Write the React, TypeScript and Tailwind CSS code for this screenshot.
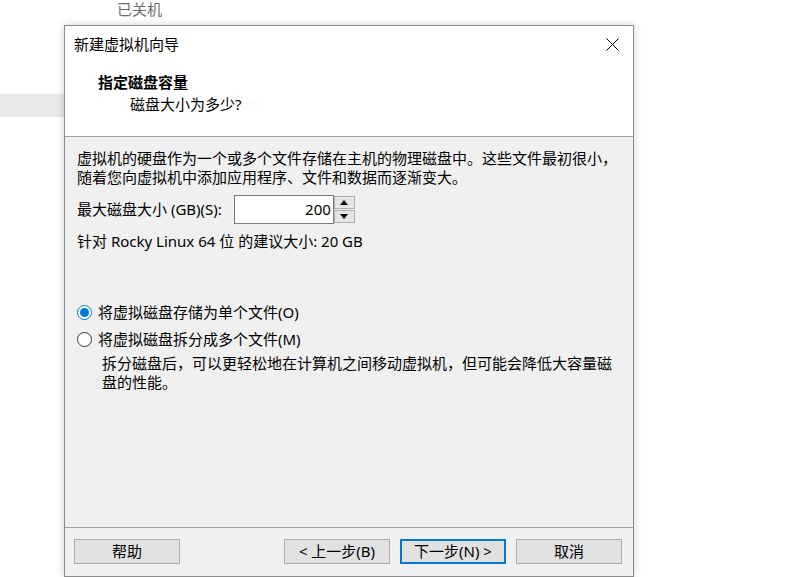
const FONT = "font-['Noto_Sans','Noto_Sans_CJK_SC',sans-serif]"

function Radio({ checked, label }: { checked: boolean; label: string }) {
  return (
    <div className="flex h-[22px] items-center">
      <span
        className={
          checked
            ? "flex h-[15px] w-[15px] items-center justify-center rounded-full border border-[#0078d7] bg-white"
            : "flex h-[15px] w-[15px] items-center justify-center rounded-full border border-[#333333] bg-white"
        }
      >
        {checked && <span className="h-[9px] w-[9px] rounded-full bg-[#0078d7]" />}
      </span>
      <span className="ml-[6px] text-[15px] leading-[19px] text-black">{label}</span>
    </div>
  )
}

function Btn({ label, primary }: { label: string; primary?: boolean }) {
  return (
    <button
      className={
        primary
          ? "flex h-[25px] w-[106px] items-center justify-center border-2 border-[#0078d7] bg-[#e1e1e1] text-[15px] leading-none text-black"
          : "flex h-[25px] w-[106px] items-center justify-center border border-[#adadad] bg-[#e1e1e1] text-[15px] leading-none text-black"
      }
    >
      {label}
    </button>
  )
}

function SpinBox() {
  return (
    <div className="ml-[12px] flex h-[29px] items-stretch">
      <div className="flex w-[100px] items-center justify-end border border-[#7a7a7a] bg-white pr-[2px] text-[15px] text-black">
        200
      </div>
      <div className="flex w-[21px] flex-col justify-center gap-[1px] py-[1px]">
        <div className="flex h-[13px] items-center justify-center border border-[#adadad] bg-[#e5e5e5]">
          <svg width="8" height="5" viewBox="0 0 8 5">
            <path d="M0 5 L4 0 L8 5 Z" fill="#000" />
          </svg>
        </div>
        <div className="flex h-[13px] items-center justify-center border border-[#adadad] bg-[#e5e5e5]">
          <svg width="8" height="5" viewBox="0 0 8 5">
            <path d="M0 0 L8 0 L4 5 Z" fill="#000" />
          </svg>
        </div>
      </div>
    </div>
  )
}

export default function App() {
  return (
    <div className={`relative h-[577px] w-[786px] overflow-hidden bg-white ${FONT}`}>
      {/* desktop behind the dialog */}
      <div className="pl-[117px] text-[15px] leading-[18px] text-[#6d6d6d]">已关机</div>
      <div className="mt-[76px] h-[23px] w-[200px] bg-[#e8e8ea]" />

      <div className="absolute left-[64px] top-[25px] flex h-[552px] w-[570px] flex-col border border-[#8c8c8c] bg-[#f0f0f0] shadow-[0_0_8px_rgba(0,0,0,0.18)]">
        <div className="bg-white">
          <div className="flex h-[37px] items-center justify-between pl-[9px] pr-[14px]">
            <span className="text-[15px] leading-[19px] text-black">新建虚拟机向导</span>
            <svg width="13" height="13" viewBox="0 0 13 13">
              <path d="M0.5 0.5 L12.5 12.5 M12.5 0.5 L0.5 12.5" stroke="#000" strokeWidth="1" />
            </svg>
          </div>
          <div className="h-[74px] border-b border-[#a0a0a0] pl-[33px] pt-[9px]">
            <div className="text-[15px] font-bold leading-[20px] text-black">指定磁盘容量</div>
            <div className="mt-[2px] pl-[32px] text-[15px] leading-[20px] text-black">磁盘大小为多少?</div>
          </div>
        </div>

        <div className="flex flex-1 flex-col pl-[12px] pt-[12px] text-[15px] leading-[19px] text-black">
          <div className="whitespace-nowrap">
            虚拟机的硬盘作为一个或多个文件存储在主机的物理磁盘中。这些文件最初很小，
            <br />
            随着您向虚拟机中添加应用程序、文件和数据而逐渐变大。
          </div>
          <div className="mt-[8px] flex items-center">
            <span>最大磁盘大小 (GB)(S):</span>
            <SpinBox />
          </div>
          <div className="mt-[8px]">针对 Rocky Linux 64 位 的建议大小: 20 GB</div>

          <div className="mt-[50px] flex flex-col gap-[5px]">
            <Radio checked label="将虚拟磁盘存储为单个文件(O)" />
            <Radio checked={false} label="将虚拟磁盘拆分成多个文件(M)" />
          </div>
          <div className="mt-[4px] whitespace-nowrap pl-[25px]">
            拆分磁盘后，可以更轻松地在计算机之间移动虚拟机，但可能会降低大容量磁
            <br />
            盘的性能。
          </div>
        </div>

        <div className="flex h-[49px] items-start border-t border-[#a0a0a0] pl-[9px] pr-[11px] pt-[11px]">
          <Btn label="帮助" />
          <div className="ml-auto flex gap-[10px]">
            <Btn label="< 上一步(B)" />
            <Btn label="下一步(N) >" primary />
          </div>
          <div className="ml-[10px]">
            <Btn label="取消" />
          </div>
        </div>
      </div>
    </div>
  )
}
